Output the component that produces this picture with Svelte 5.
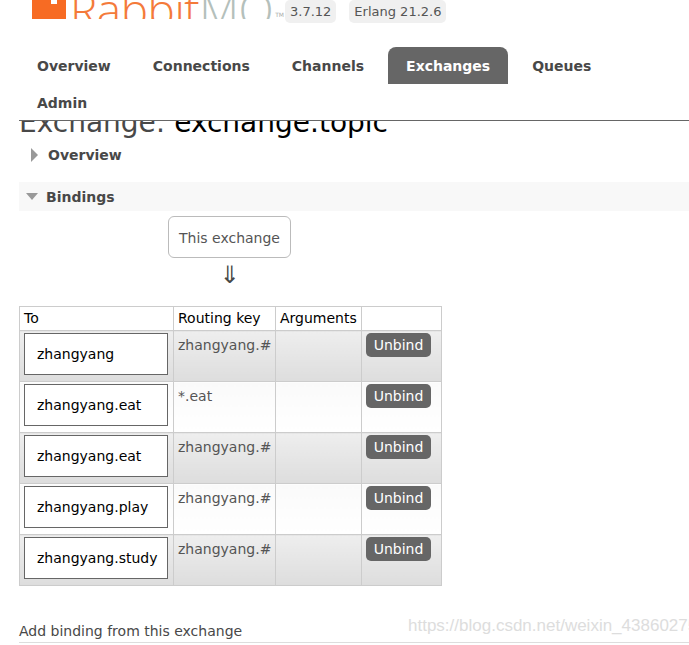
<script>
  const tabs = [
    { label: 'Overview' },
    { label: 'Connections' },
    { label: 'Channels' },
    { label: 'Exchanges', active: true },
    { label: 'Queues' },
    { label: 'Admin' }
  ]

  const bindings = [
    { to: 'zhangyang', key: 'zhangyang.#' },
    { to: 'zhangyang.eat', key: '*.eat' },
    { to: 'zhangyang.eat', key: 'zhangyang.#' },
    { to: 'zhangyang.play', key: 'zhangyang.#' },
    { to: 'zhangyang.study', key: 'zhangyang.#' }
  ]
</script>

<div class="page">
  <header class="header">
    <div class="top">
      <div class="logo">
        <svg class="mark" width="34" height="24" viewBox="0 0 34 24">
          <path fill="#f76b23" d="M0 0h34v24H0z" />
          <path fill="#fff" d="M19 3h6v6h-6z" />
        </svg>
        <span class="word"><span class="rabbit">Rabbit</span><span class="mq">MQ</span></span>
        <span class="tm">TM</span>
      </div>
      <span class="ver">3.7.12</span>
      <span class="ver">Erlang 21.2.6</span>
    </div>
    <nav class="tabs">
      {#each tabs as tab}
        <a class="tab" class:active={tab.active} href="#top">{tab.label}</a>
      {/each}
    </nav>
  </header>

  <main class="main">
    <h1 class="title">Exchange: <b>exchange.topic</b></h1>

    <div class="section closed">
      <i class="tri right"></i>
      <h2>Overview</h2>
    </div>

    <div class="section open">
      <i class="tri down"></i>
      <h2>Bindings</h2>
    </div>

    <div class="flow">
      <div class="this">This exchange</div>
      <div class="arrow">⇓</div>
    </div>

    <table class="list">
      <thead>
        <tr>
          <th class="c1">To</th>
          <th class="c2">Routing key</th>
          <th class="c3">Arguments</th>
          <th class="c4"></th>
        </tr>
      </thead>
      <tbody>
        {#each bindings as b, i}
          <tr class={i % 2 ? 'alt2' : 'alt1'}>
            <td><div class="queue">{b.to}</div></td>
            <td>{b.key}</td>
            <td></td>
            <td><button class="unbind">Unbind</button></td>
          </tr>
        {/each}
      </tbody>
    </table>

    <h3 class="add">Add binding from this exchange</h3>
  </main>

  <span class="mark-url">https://blog.csdn.net/weixin_43860275</span>
</div>

<style>
  :global(body) {
    margin: 0;
    background: #fff;
    overflow: hidden;
  }

  .page {
    position: relative;
    width: 689px;
    height: 645px;
    overflow: hidden;
    font-family: "DejaVu Sans", Verdana, sans-serif;
    font-size: 14px;
    color: #484848;
  }

  .header {
    position: relative;
    z-index: 1;
    height: 120px;
    margin-left: 19px;
    border-bottom: 1px solid #666;
    background: #fff;
  }

  .top {
    display: flex;
    align-items: flex-start;
    height: 47px;
    margin-left: 13px;
  }

  .logo {
    display: flex;
    align-items: flex-end;
    width: 253px;
    height: 19px;
    overflow: hidden;
  }

  .mark {
    flex: none;
    margin-bottom: 0;
  }

  .word {
    font-family: "Open Sans", sans-serif;
    font-weight: 300;
    font-size: 46px;
    line-height: 19px;
    height: 19px;
    margin-left: 4px;
    letter-spacing: -0.5px;
    white-space: nowrap;
  }

  .rabbit {
    color: #f47a3a;
  }

  .mq {
    color: #b4c0bb;
  }

  .tm {
    font-size: 6px;
    color: #aaa;
    margin-left: 2px;
    margin-bottom: 1px;
  }

  .ver {
    height: 23px;
    line-height: 24px;
    padding: 0 5px;
    margin-right: 13px;
    border-radius: 5px;
    background: #f0f0f0;
    font-size: 13px;
    color: #555;
  }

  .tabs {
    display: flex;
    flex-wrap: wrap;
    column-gap: 6px;
  }

  .tab {
    display: block;
    height: 37px;
    line-height: 38px;
    padding: 0 18px;
    border-radius: 8px 8px 0 0;
    font-weight: bold;
    font-size: 14px;
    color: #484848;
    text-decoration: none;
  }

  .active {
    background: #666;
    color: #fff;
  }

  .main {
    padding: 0 0 0 19px;
  }

  .title {
    margin: -15px 0 0;
    font-size: 28px;
    line-height: 34px;
    font-weight: normal;
    color: #484848;
    white-space: nowrap;
  }

  .title b {
    font-weight: normal;
    color: #000;
  }

  .section {
    display: flex;
    align-items: center;
  }

  .section h2 {
    margin: 0;
    font-size: 14px;
    font-weight: bold;
    color: #484848;
  }

  .closed {
    height: 29px;
    margin-top: 0;
    padding-left: 12px;
  }

  .closed h2 {
    margin-left: 10px;
  }

  .open {
    height: 29px;
    margin-top: 13px;
    padding-left: 7px;
    background: #f8f8f8;
  }

  .open h2 {
    margin-left: 8px;
  }

  .tri {
    width: 0;
    height: 0;
    border-style: solid;
    border-color: transparent;
  }

  .right {
    border-width: 7px 0 7px 7px;
    border-left-color: #999;
  }

  .down {
    border-width: 7px 6.5px 0;
    border-top-color: #999;
  }

  .flow {
    display: flex;
    flex-direction: column;
    align-items: center;
    width: 123px;
    margin: 5px 0 0 149px;
  }

  .this {
    box-sizing: border-box;
    width: 123px;
    height: 42px;
    line-height: 42px;
    text-align: center;
    border: 1px solid #bbb;
    border-radius: 6px;
    color: #555;
    white-space: nowrap;
  }

  .arrow {
    height: 48px;
    line-height: 34px;
    font-size: 24px;
    color: #484848;
  }

  .list {
    border-collapse: collapse;
    table-layout: fixed;
    width: 422px;
  }

  .c1 { width: 154px; }
  .c2 { width: 102px; }
  .c3 { width: 86px; }
  .c4 { width: 80px; }

  .list th,
  .list td {
    box-sizing: border-box;
    border: 1px solid #ccc;
    padding: 0 4px;
    vertical-align: top;
    text-align: left;
    font-size: 14px;
  }

  .list th {
    height: 22px;
    line-height: 23px;
    font-weight: normal;
    color: #000;
    white-space: nowrap;
  }

  .list td {
    height: 51px;
    line-height: 24px;
    padding-top: 2px;
    color: #555;
  }

  .alt1 td {
    background: linear-gradient(#eee, #ddd);
  }

  .alt2 td {
    background: linear-gradient(#fafafa, #fff);
  }

  .queue {
    box-sizing: border-box;
    width: 144px;
    height: 42px;
    padding-left: 12px;
    line-height: 40px;
    border: 1px solid #666;
    background: #fff;
    color: #000;
    white-space: nowrap;
  }

  .unbind {
    display: block;
    width: 65px;
    height: 24px;
    padding: 0;
    border: 0;
    border-radius: 5px;
    background: #666;
    color: #fff;
    font: 14px "DejaVu Sans", Verdana, sans-serif;
  }

  .add {
    margin: 34px 0 0;
    height: 22px;
    line-height: 22px;
    border-bottom: 1px solid #ddd;
    font-size: 14px;
    font-weight: normal;
    color: #484848;
  }

  .mark-url {
    position: absolute;
    left: 408px;
    top: 616px;
    font-family: "Liberation Sans", Arial, sans-serif;
    font-size: 17px;
    color: #ddd;
    white-space: nowrap;
  }
</style>
